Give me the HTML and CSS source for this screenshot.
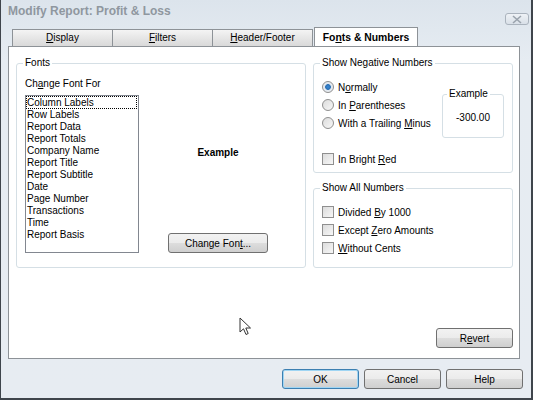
FILE: index.html
```html
<!DOCTYPE html>
<html lang="en">
<head>
    <meta charset="UTF-8">
    <title>Modify Report: Profit &amp; Loss</title>
    <link rel="stylesheet" href="styles.css">
</head>
<body>
<div class="window">
    <!-- Title bar -->
    <div class="titlebar">
        <span class="title">Modify Report: Profit &amp; Loss</span>
        <span class="close-btn">
            <svg width="14" height="9" viewBox="0 0 14 9"><path d="M3 1 L11 8 M11 1 L3 8" stroke="#9aa3ad" stroke-width="1.6" fill="none"/></svg>
        </span>
    </div>

    <!-- Tabs -->
    <div class="tabs">
        <div class="tab"><u>D</u>isplay</div>
        <div class="tab"><u>F</u>ilters</div>
        <div class="tab"><u>H</u>eader/Footer</div>
        <div class="tab active">Fo<u>n</u>ts &amp; Numbers</div>
    </div>

    <div class="panel">
        <div class="columns">
            <fieldset class="group fonts-group">
                <legend>Fonts</legend>
                <div class="caption">Ch<u>a</u>nge Font For</div>
                <div class="fonts-body">
                    <ul class="listbox">
                        <li class="selected">Column Labels</li>
                        <li>Row Labels</li>
                        <li>Report Data</li>
                        <li>Report Totals</li>
                        <li>Company Name</li>
                        <li>Report Title</li>
                        <li>Report Subtitle</li>
                        <li>Date</li>
                        <li>Page Number</li>
                        <li>Transactions</li>
                        <li>Time</li>
                        <li>Report Basis</li>
                    </ul>
                    <div class="preview">
                        <div class="preview-text">Example</div>
                        <button class="btn change-font">Change Fon<u>t</u>...</button>
                    </div>
                </div>
            </fieldset>

            <div class="right-col">
                <fieldset class="group neg-group">
                    <legend>Show Negative Numbers</legend>
                    <div class="neg-top">
                        <div class="options">
                            <label class="option"><input type="radio" name="neg" checked><span>N<u>o</u>rmally</span></label>
                            <label class="option"><input type="radio" name="neg"><span>In <u>P</u>arentheses</span></label>
                            <label class="option"><input type="radio" name="neg"><span>With a Trailing <u>M</u>inus</span></label>
                        </div>
                        <fieldset class="example-box">
                            <legend>Example</legend>
                            <div class="example-value">-300.00</div>
                        </fieldset>
                    </div>
                    <label class="option red-option"><input type="checkbox"><span>In Bright <u>R</u>ed</span></label>
                </fieldset>

                <fieldset class="group all-group">
                    <legend>Show All Numbers</legend>
                    <label class="option"><input type="checkbox"><span>Divided <u>B</u>y 1000</span></label>
                    <label class="option"><input type="checkbox"><span>Except <u>Z</u>ero Amounts</span></label>
                    <label class="option"><input type="checkbox"><span><u>W</u>ithout Cents</span></label>
                </fieldset>
            </div>
        </div>

        <div class="panel-foot">
            <button class="btn">R<u>e</u>vert</button>
        </div>

        <!-- mouse pointer -->
        <svg class="pointer" width="13" height="20" viewBox="0 0 13 20">
            <path d="M1 1 L1 15 L4.5 11.8 L7 17.5 L9.2 16.5 L6.8 11 L11.5 11 Z" fill="#fff" stroke="#333" stroke-width="1" stroke-linejoin="round"/>
        </svg>
    </div>

    <div class="actions">
        <button class="btn default">OK</button>
        <button class="btn">Cancel</button>
        <button class="btn">Help</button>
    </div>
</div>
</body>
</html>
```

FILE: styles.css
```css
html, body {
    margin: 0;
    padding: 0;
    background: #e3e9f0;
}

body {
    font-family: "Liberation Sans", Arial, sans-serif;
    font-size: 10px;
    color: #000;
}

u {
    text-decoration: underline;
    text-underline-offset: 1px;
}

.window {
    width: 533px;
    height: 400px;
    box-sizing: border-box;
    border-left: 1px solid #3f454c;
    border-right: 2px solid #3f454c;
    border-bottom: 2px solid #3f454c;
    background: linear-gradient(#dce4ec, #e6ecf2 60px, #e7ecf2);
    display: flex;
    flex-direction: column;
}

.titlebar {
    height: 27px;
    display: flex;
    justify-content: space-between;
    align-items: flex-start;
}

.title {
    padding: 4px 0 0 7px;
    font-size: 12px;
    font-weight: bold;
    line-height: 14px;
    color: #8f979f;
}

.close-btn {
    margin: 13px 2px 0 0;
    width: 24px;
    height: 12px;
    box-sizing: border-box;
    border: 1px solid #aab3bd;
    border-radius: 3px;
    background: linear-gradient(#eef2f6, #d9e0e8);
    display: flex;
    align-items: center;
    justify-content: center;
}

/* Tabs */
.tabs {
    height: 19px;
    padding-left: 11px;
    display: flex;
    align-items: flex-end;
}

.tab {
    width: 101px;
    height: 17px;
    box-sizing: border-box;
    margin-right: -1px;
    border: 1px solid #8d9297;
    border-bottom: none;
    background: linear-gradient(#f4f4f4, #e6e6e6 50%, #d9d9d9);
    text-align: center;
    line-height: 16px;
}

.tab.active {
    width: 104px;
    height: 20px;
    margin: 0 0 -1px 2px;
    position: relative;
    background: #fff;
    font-weight: bold;
    font-size: 10.4px;
    line-height: 19px;
}

/* Panel */
.panel {
    position: relative;
    width: 512px;
    height: 313px;
    box-sizing: border-box;
    margin-left: 7px;
    padding: 10px 0 0 7px;
    background: #fff;
    border: 1px solid #8d9297;
    display: flex;
    flex-direction: column;
}

.columns {
    display: flex;
    gap: 7px;
}

.group {
    margin: 0;
    padding: 9px 8px 10px 8px;
    border: 1px solid #d5dfe5;
    border-radius: 3px;
    box-sizing: border-box;
}

.group legend,
.example-box legend {
    padding: 0 2px;
    margin-left: -2px;
    line-height: 12px;
}

.fonts-group {
    width: 290px;
    height: 211px;
    padding-bottom: 14px;
}

.caption {
    line-height: 12px;
}

.fonts-body {
    display: flex;
    margin-top: 5px;
}

.listbox {
    list-style: none;
    margin: 0;
    padding: 0;
    width: 114px;
    height: 158px;
    box-sizing: border-box;
    border: 1px solid #828790;
}

.listbox li {
    line-height: 12px;
    padding-left: 1px;
}

.listbox li.selected {
    outline: 1px dotted #000;
    outline-offset: -1px;
    margin-right: 1px;
    line-height: 13px;
}

.preview {
    flex: 1;
    display: flex;
    flex-direction: column;
    align-items: center;
}

.preview-text {
    margin-top: 52px;
    font-weight: bold;
    line-height: 12px;
}

.btn {
    font-family: inherit;
    font-size: 10px;
    color: #000;
    width: 77px;
    height: 20px;
    padding: 0;
    border: 1px solid #707070;
    border-radius: 3px;
    background: linear-gradient(#f2f2f2, #ebebeb 50%, #dddddd 51%, #cfcfcf);
}

.btn.change-font {
    margin-top: auto;
    width: 100px;
}

.btn.default {
    border-color: #3c7fb1;
    box-shadow: inset 0 0 0 1px #9fd5f3;
}

.right-col {
    width: 200px;
    display: flex;
    flex-direction: column;
    gap: 9px;
}

.neg-group {
    height: 116px;
}

.all-group {
    height: 86px;
}

.neg-top {
    display: flex;
    justify-content: space-between;
}

.option {
    display: flex;
    align-items: center;
    gap: 4px;
    height: 18px;
}

.option input {
    appearance: none;
    margin: 0;
    width: 12px;
    height: 12px;
    box-sizing: border-box;
    border: 1px solid #8f8f8f;
    background: linear-gradient(135deg, #dcdcdc, #f7f7f7);
}

.option input[type="radio"] {
    border-radius: 50%;
}

.option input[type="radio"]:checked {
    background: radial-gradient(circle, #3a8ad4 0, #2a6fb5 2.5px, #dfe6ee 3.2px, #f5f5f5);
}

.red-option {
    margin-top: 12px;
}

.example-box {
    margin: 10px 0 0 0;
    width: 62px;
    height: 50px;
    box-sizing: border-box;
    padding: 12px 0 0 6px;
    border: 1px solid #d5dfe5;
    border-radius: 3px;
}

.example-value {
    margin-left: -6px;
    text-align: center;
    line-height: 12px;
}

.panel-foot {
    margin-top: auto;
    padding: 0 6px 10px 0;
    display: flex;
    justify-content: flex-end;
}

.pointer {
    position: absolute;
    left: 230px;
    top: 270px;
}

.actions {
    margin-top: 10px;
    padding-right: 8px;
    display: flex;
    justify-content: flex-end;
    gap: 5px;
}
```
